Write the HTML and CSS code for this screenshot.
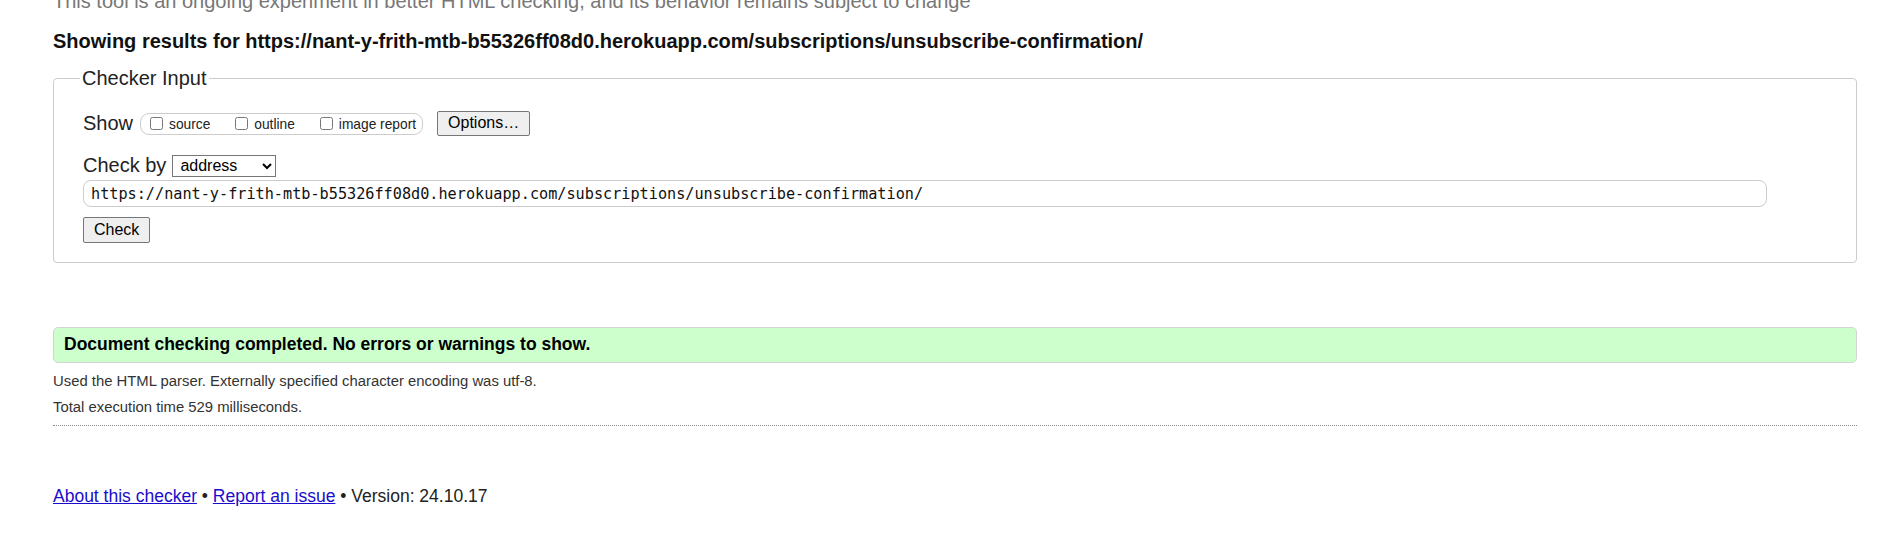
FILE: index.html
```html
<!DOCTYPE html>
<html lang="en">
<head>
<meta charset="utf-8">
<title>Showing results for https://nant-y-frith-mtb-b55326ff08d0.herokuapp.com/subscriptions/unsubscribe-confirmation/ - Nu Html Checker</title>
<link rel="stylesheet" href="styles.css">
</head>
<body>
<div class="page">
  <p class="intro">This tool is an ongoing experiment in better HTML checking, and its behavior remains subject to change</p>
  <h2 class="results-title">Showing results for https://nant-y-frith-mtb-b55326ff08d0.herokuapp.com/subscriptions/unsubscribe-confirmation/</h2>

  <fieldset class="checker">
    <legend class="checker-legend">Checker Input</legend>
    <div class="row row-show">
      <span class="row-label">Show</span>
      <span class="pill">
        <label class="opt"><input type="checkbox" class="cb">source</label>
        <label class="opt"><input type="checkbox" class="cb">outline</label>
        <label class="opt"><input type="checkbox" class="cb">image report</label>
      </span>
      <button type="button" class="btn btn-options">Options…</button>
    </div>
    <div class="row row-checkby">
      <span class="row-label">Check by</span>
      <select class="select-by">
        <option>address</option>
        <option>file upload</option>
        <option>text input</option>
      </select>
    </div>
    <input class="url" type="url" value="https://nant-y-frith-mtb-b55326ff08d0.herokuapp.com/subscriptions/unsubscribe-confirmation/">
    <button type="button" class="btn btn-check">Check</button>
  </fieldset>

  <p class="success">Document checking completed. No errors or warnings to show.</p>
  <p class="details">Used the HTML parser. Externally specified character encoding was utf-8.</p>
  <p class="details details-last">Total execution time 529 milliseconds.</p>

  <p class="footer"><a href="#">About this checker</a> • <a href="#">Report an issue</a> • Version: 24.10.17</p>
</div>
</body>
</html>
```

FILE: styles.css
```css
html, body {
  margin: 0;
  padding: 0;
  background: #fff;
}

body {
  font-family: "Liberation Sans", Arial, sans-serif;
  color: #222;
  overflow: hidden;
}

.page {
  padding: 0 45px 0 53px;
}

.intro {
  margin: -10.5px 0 0;
  font-size: 20px;
  line-height: 23px;
  color: #777;
  white-space: nowrap;
}

.results-title {
  margin: 17px 0 0;
  font-size: 20px;
  line-height: 23px;
  font-weight: bold;
  color: #111;
  white-space: nowrap;
}

.checker {
  margin: 14px 0 0;
  padding: 21.5px 89px 19px 29px;
  border: 1px solid #ccc;
  border-radius: 4px;
  min-width: 0;
}

.checker-legend {
  margin-left: -3px;
  padding: 0 2px;
  font-size: 20px;
  line-height: 23px;
  color: #222;
}

.row {
  display: flex;
  align-items: center;
}

.row-show {
  height: 25px;
}

.row-label {
  font-size: 20px;
  line-height: 23px;
  color: #222;
}

.row-show .row-label {
  margin-right: 7px;
}

.pill {
  display: flex;
  align-items: flex-start;
  height: 20px;
  padding: 0 6px 0 6px;
  border: 1px solid #ccc;
  border-radius: 9px;
  font-size: 13.75px;
  line-height: 20px;
  color: #222;
}

.opt {
  display: flex;
  align-items: flex-start;
  margin-right: 22px;
  padding-top: 1px;
}

.opt:last-child {
  margin-right: 0;
}

.cb {
  width: 13px;
  height: 13px;
  margin: 2px 6px 0 3px;
}

.btn {
  font-family: "Liberation Sans", Arial, sans-serif;
  font-size: 16px;
  line-height: 18px;
  color: #000;
  background: #efefef;
  border: 1px solid #767676;
  border-radius: 2px;
  padding: 2px 10px 3px;
}

.btn-options {
  margin-left: 14px;
  height: 25px;
}

.row-checkby {
  margin-top: 17.5px;
  height: 24px;
}

.row-checkby .row-label {
  margin-right: 6px;
}

.select-by {
  width: 104px;
  height: 22px;
  font-family: "Liberation Sans", Arial, sans-serif;
  font-size: 16px;
  color: #000;
  background: #fff;
  border: 1px solid #767676;
  border-radius: 0;
  padding: 0 0 0 3px;
}

.url {
  display: block;
  box-sizing: border-box;
  width: 100%;
  height: 27px;
  margin: 2.5px 0 0;
  padding: 0 7px;
  font-family: "DejaVu Sans Mono", "Liberation Mono", monospace;
  font-size: 15.2px;
  color: #111;
  border: 1px solid #ccc;
  border-radius: 8px;
  background: #fff;
}

.btn-check {
  display: block;
  margin-top: 10px;
  height: 26px;
}

.success {
  margin: 64px 0 0;
  height: 34px;
  padding: 0 10px;
  border: 1px solid #d4d4d4;
  border-radius: 5px;
  background: #ccffcc;
  font-size: 17.5px;
  line-height: 33px;
  font-weight: bold;
  color: #000;
}

.details {
  margin: 5px 0 0;
  font-size: 14.85px;
  line-height: 26px;
  color: #333;
}

.details + .details {
  margin-top: 0;
}

.details-last {
  padding-bottom: 5px;
  border-bottom: 1px dotted #888;
}

.footer {
  margin: 60px 0 0;
  font-size: 17.5px;
  line-height: 20px;
  color: #222;
}

.footer a {
  color: #1a0dcc;
  text-decoration: underline;
}
```
